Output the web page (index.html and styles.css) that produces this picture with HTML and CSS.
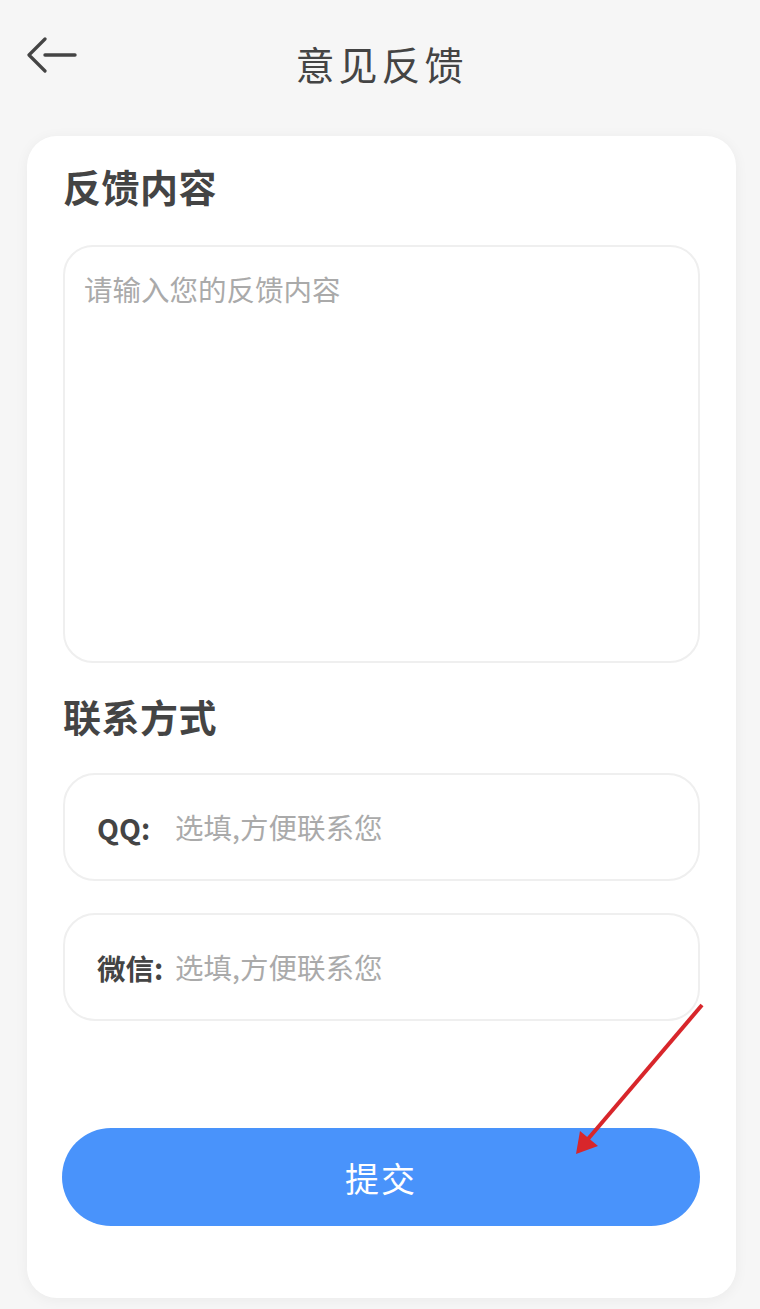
FILE: index.html
```html
<!DOCTYPE html>
<html lang="zh">
<head>
<meta charset="utf-8">
<title>意见反馈</title>
<link rel="stylesheet" href="styles.css">
</head>
<body>
<div class="page">
  <header class="topbar">
    <svg class="back" width="52" height="40" viewBox="0 0 52 40">
      <path d="M18 2 L2 18 L18 34" fill="none" stroke="#444" stroke-width="3.2" stroke-linecap="round" stroke-linejoin="round"/>
      <path d="M18 18 L48 18" fill="none" stroke="#444" stroke-width="3.4" stroke-linecap="round"/>
    </svg>
    <h1 class="title">意见反馈</h1>
  </header>
  <main class="card">
    <h2 class="section-title">反馈内容</h2>
    <div class="textarea"><span class="placeholder">请输入您的反馈内容</span></div>
    <h2 class="section-title contact">联系方式</h2>
    <div class="field"><span class="label">QQ:</span><span class="placeholder">选填,方便联系您</span></div>
    <div class="field"><span class="label">微信:</span><span class="placeholder">选填,方便联系您</span></div>
    <button class="submit">提交</button>
  </main>
  <svg class="annot" width="760" height="1309" viewBox="0 0 760 1309">
    <line x1="702" y1="1005" x2="588" y2="1139" stroke="#d8262b" stroke-width="4"/>
    <polygon points="576,1154 580,1131 598,1146" fill="#d8262b"/>
  </svg>
</div>
</body>
</html>
```
FILE: styles.css
```css
* { box-sizing: border-box; }
html, body { margin: 0; padding: 0; }
body {
  background: #f6f6f6;
  font-family: "Noto Sans CJK SC", "Noto Sans", sans-serif;
  color: #444;
}
.page {
  position: relative;
  width: 760px;
  height: 1309px;
  padding: 0 24px 0 27px;
}
.topbar {
  position: relative;
  height: 136px;
  display: flex;
  justify-content: center;
}
.back {
  position: absolute;
  left: 0;
  top: 37px;
}
.title {
  margin: 35px 0 0;
  font-size: 39px;
  font-weight: 400;
  letter-spacing: 4px;
  line-height: 56px;
  color: #444;
}
.card {
  background: #fff;
  border-radius: 30px;
  height: 1162px;
  padding: 28px 36px 0 36px;
  box-shadow: 0 2px 14px rgba(0,0,0,0.05);
  display: flex;
  flex-direction: column;
}
.section-title {
  margin: 0;
  font-size: 38px;
  font-weight: 700;
  line-height: 44px;
  letter-spacing: 0.5px;
  color: #444;
}
.textarea {
  margin-top: 37px;
  height: 418px;
  border: 2px solid #efefef;
  border-radius: 30px;
  padding: 22px 19px;
}
.placeholder {
  font-size: 28.5px;
  line-height: 40px;
  color: #aaa;
}
.section-title.contact { margin-top: 31px; }
.field {
  margin-top: 35px;
  height: 108px;
  border: 2px solid #efefef;
  border-radius: 32px;
  display: flex;
  align-items: center;
  padding-left: 32px;
}
.field + .field { margin-top: 32px; }
.label {
  font-size: 28.5px;
  font-weight: 700;
  color: #444;
  width: 78px;
  white-space: nowrap;
}
.submit {
  margin-top: 107px;
  height: 98px;
  width: 638px;
  margin-left: -1px;
  border: none;
  border-radius: 49px;
  background: #4993fb;
  color: #fff;
  font-family: "Noto Sans CJK SC", sans-serif;
  font-size: 34px;
  letter-spacing: 2px;
}
.annot {
  position: absolute;
  left: 0;
  top: 0;
  pointer-events: none;
}
```
